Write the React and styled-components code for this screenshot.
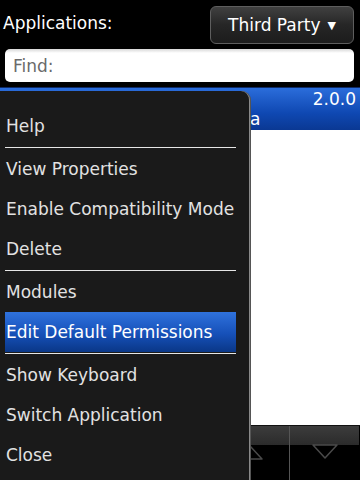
import React from 'react'
import styled, { createGlobalStyle } from 'styled-components'

const Global = createGlobalStyle`
  html, body { margin: 0; padding: 0; background: #000; }
  body { font-family: "DejaVu Sans", "Liberation Sans", sans-serif; }
`

const Screen = styled.div`
  position: relative;
  width: 360px;
  height: 480px;
  overflow: hidden;
  background: #000;
  display: flex;
  flex-direction: column;
`

const Header = styled.div`
  height: 49px;
  display: flex;
  align-items: center;
  justify-content: space-between;
  padding: 0 6px 0 3px;
  box-sizing: border-box;
`

const Title = styled.span`
  color: #fff;
  font-size: 17px;
  margin-top: -4px;
`

const DropButton = styled.button`
  width: 144px;
  height: 38px;
  margin-top: 0;
  border-radius: 6px;
  border: 1px solid #5e5e5e;
  background: linear-gradient(#404040, #262626 50%, #1c1c1c);
  color: #fff;
  font-family: inherit;
  font-size: 17px;
  display: flex;
  align-items: center;
  justify-content: center;
  gap: 7px;
  padding: 0;
`

const Arrow = styled.span`
  font-size: 11px;
  margin-top: 1px;
`

const Find = styled.div`
  margin: 0 6px 0 5px;
  height: 33px;
  border-radius: 5px;
  background: linear-gradient(#d8d8d8, #fff 4px, #fff);
  display: flex;
  align-items: center;
  padding-left: 8px;
  color: #6a6a6a;
  font-size: 17px;
`

const List = styled.div`
  flex: 1;
  margin-top: 5px;
  display: flex;
  flex-direction: column;
  background: #fff;
`

const Selected = styled.div`
  height: 43px;
  border-top: 1px solid #0e2a66;
  background: linear-gradient(#2b6ddb, #0f48b2 60%, #0a3893);
  color: #fff;
  font-size: 17px;
  display: flex;
  flex-direction: column;
  padding: 1px 4px 0 250px;
  box-sizing: border-box;
`

const Version = styled.span`
  align-self: flex-end;
  line-height: 20px;
`

const Name = styled.span`
  line-height: 20px;
`

const Toolbar = styled.div`
  height: 54px;
  display: flex;
  border-top: 1px solid #111;
  background: #000;
`

const ToolButton = styled.div`
  position: relative;
  width: ${p => p.$w}px;
  border-left: ${p => (p.$divider ? '1px solid #555' : 'none')};
  background: linear-gradient(#3c3c3c, #2b2b2b) top / 100% 19px no-repeat;
  border-radius: 0 0 ${p => (p.$round ? '8px' : '0')} 0;
  display: flex;
  justify-content: ${p => (p.$end ? 'flex-end' : 'center')};
  padding: 17px ${p => (p.$end ? '24px' : '0')} 0 0;
  box-sizing: border-box;
`

const Menu = styled.div`
  position: absolute;
  left: 0;
  top: 91px;
  width: 250px;
  bottom: 0;
  background: #1a1a1a;
  border-right: 1px solid #8a8a8a;
  border-top-right-radius: 9px;
  box-shadow: 1px 0 0 #555;
  padding: 15px 0 0 0;
  box-sizing: border-box;
  display: flex;
  flex-direction: column;
`

const Item = styled.div`
  height: 40px;
  margin: 0 13px 0 5px;
  padding-left: 1px;
  display: flex;
  align-items: center;
  font-size: 17px;
  color: ${p => (p.$active ? '#fff' : '#e2e2e2')};
  background: ${p => (p.$active ? 'linear-gradient(#2f72dd, #1650b8 55%, #0a3787)' : 'transparent')};
  white-space: nowrap;
`

const Separator = styled.div`
  height: 1px;
  margin: 1px 13px 1px 5px;
  background: #e6e6e6;
`

const menu = [
  'Help',
  '-',
  'View Properties',
  'Enable Compatibility Mode',
  'Delete',
  '-',
  'Modules',
  'Edit Default Permissions',
  '-',
  'Show Keyboard',
  'Switch Application',
  'Close',
]

const Triangle = ({ up }) => (
  <svg width="30" height="18" viewBox="0 0 30 18">
    <path
      d={up ? 'M3 16 L15 3 L27 16 Z' : 'M3 2 L27 2 L15 15 Z'}
      fill="none"
      stroke="#4a4a4a"
      strokeWidth="1.5"
      strokeLinejoin="round"
    />
  </svg>
)

export default function App() {
  return (
    <Screen>
      <Global />
      <Header>
        <Title>Applications:</Title>
        <DropButton>
          Third Party <Arrow>▼</Arrow>
        </DropButton>
      </Header>
      <Find>Find:</Find>
      <List>
        <Selected>
          <Version>2.0.0</Version>
          <Name>a</Name>
        </Selected>
      </List>
      <Toolbar>
        <ToolButton $w={289} $end>
          <Triangle up />
        </ToolButton>
        <ToolButton $w={70} $divider $round>
          <Triangle />
        </ToolButton>
      </Toolbar>
      <Menu>
        {menu.map((m, i) =>
          m === '-' ? (
            <Separator key={i} />
          ) : (
            <Item key={i} $active={m === 'Edit Default Permissions'}>
              {m}
            </Item>
          )
        )}
      </Menu>
    </Screen>
  )
}
